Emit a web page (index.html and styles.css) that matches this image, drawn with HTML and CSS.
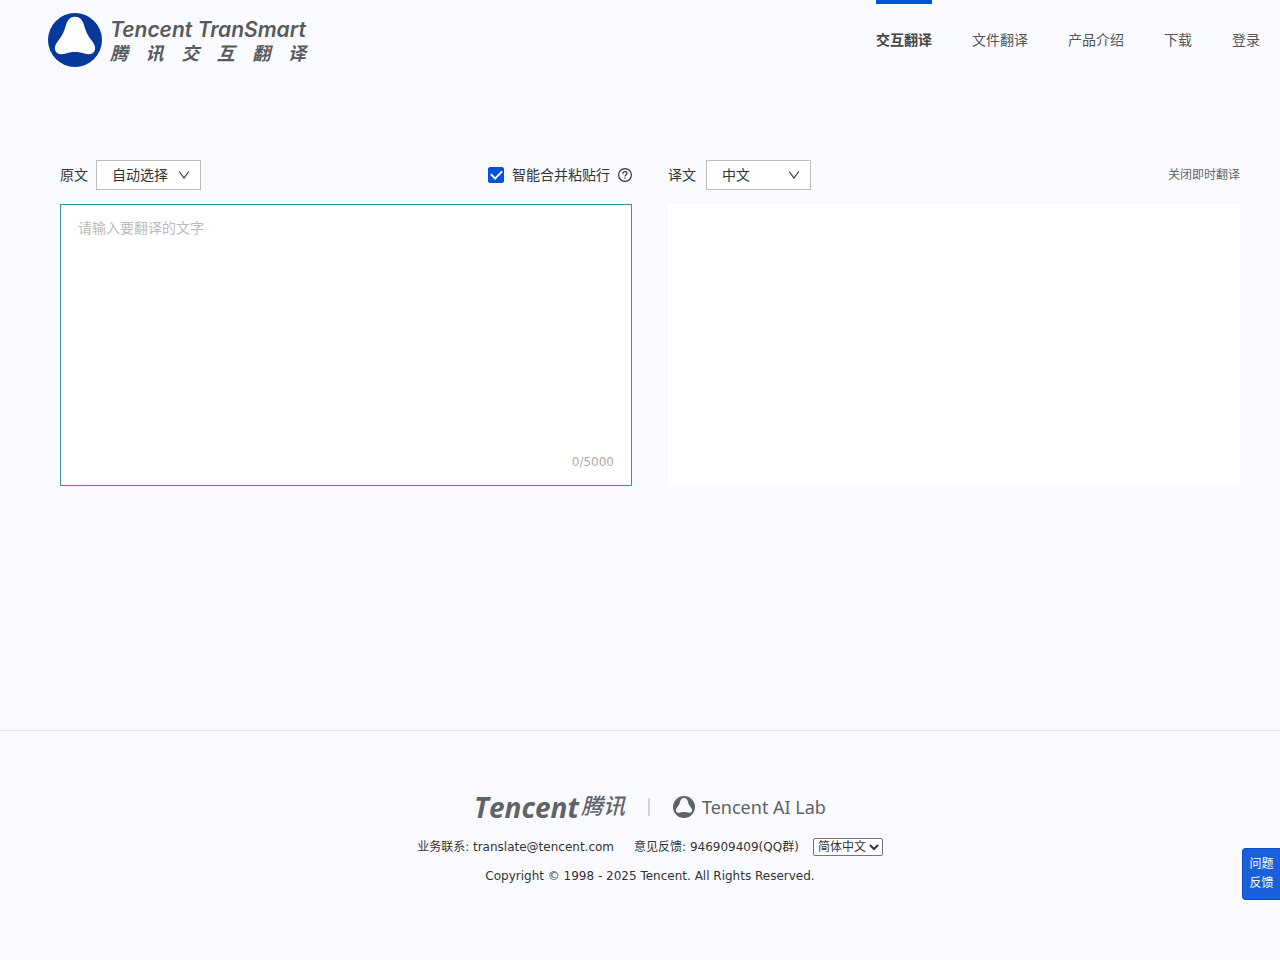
FILE: index.html
```html
<!DOCTYPE html>
<html lang="zh-CN">
<head>
<meta charset="utf-8">
<meta name="viewport" content="width=device-width, initial-scale=1">
<title>腾讯交互翻译</title>
<link rel="stylesheet" href="styles.css">
</head>
<body>
<header class="header">
  <a class="brand" href="#" aria-label="Tencent TranSmart">
    <svg class="brand-mark" viewBox="0 0 54 54" aria-hidden="true">
      <circle cx="27" cy="27" r="27" fill="#04389a"/>
      <path d="M27 3.700C32 3.700 34.500 7 36 12C37.500 18 40 23 44 28C46.500 31 47.500 34 47 36.500C46 41 41.500 42 37 40.800C31 38.500 23 38.500 17 40.800C12.500 42 8 41 7 36.500C6.500 34 7.500 31 10 28C14 23 16.500 18 18 12C19.500 7 22 3.700 27 3.700Z" fill="#fff"/>
    </svg>
    <span class="brand-text">
      <span class="brand-en">Tencent TranSmart</span>
      <span class="brand-zh"><span>腾</span><span>讯</span><span>交</span><span>互</span><span>翻</span><span>译</span></span>
    </span>
  </a>
  <nav class="nav">
    <a class="nav-link active" href="#">交互翻译</a>
    <a class="nav-link" href="#">文件翻译</a>
    <a class="nav-link" href="#">产品介绍</a>
    <a class="nav-link" href="#">下载</a>
    <a class="nav-link" href="#">登录</a>
  </nav>
</header>

<main class="translator">
  <section class="panel">
    <div class="toolbar">
      <label for="source-lang">原文</label>
      <span class="picker source-picker">
        <select id="source-lang"><option>自动选择</option><option>中文</option><option>英语</option></select>
        <svg class="chevron" viewBox="0 0 12 10" aria-hidden="true"><path d="M1.200 1.500 6 8 10.800 1.500"/></svg>
      </span>
      <div class="tools">
        <label class="merge"><input type="checkbox" checked>智能合并粘贴行</label>
        <button class="help" type="button" aria-label="帮助">
          <svg viewBox="0 0 14 14" aria-hidden="true"><circle cx="7" cy="7" r="6.400"/><path d="M5 5.700C5 4.400 5.800 3.700 7 3.700S9 4.500 9 5.500C9 6.800 7 6.900 7 8.400M7 9.600V10.700"/></svg>
        </button>
      </div>
    </div>
    <div class="box source-box">
      <textarea class="source-text" aria-label="原文" placeholder="请输入要翻译的文字"></textarea>
      <span class="counter">0/5000</span>
    </div>
  </section>
  <section class="panel">
    <div class="toolbar">
      <label for="target-lang">译文</label>
      <span class="picker target-picker">
        <select id="target-lang"><option>中文</option><option>英语</option></select>
        <svg class="chevron" viewBox="0 0 12 10" aria-hidden="true"><path d="M1.200 1.500 6 8 10.800 1.500"/></svg>
      </span>
      <button class="instant" type="button">关闭即时翻译</button>
    </div>
    <div class="box"></div>
  </section>
</main>

<footer class="footer">
  <div class="partners">
    <a class="tencent" href="#"><span class="tencent-en">Tencent</span><span class="tencent-zh">腾讯</span></a>
    <span class="divider"></span>
    <a class="lab" href="#">
      <svg class="lab-mark" viewBox="0 0 54 54" aria-hidden="true">
        <circle cx="27" cy="27" r="27" fill="#5f6267"/>
        <path d="M27 5C32 5 34.500 8 36 12C37.500 18 40 23 44 28C46.500 31 47.500 34 47 36.500C46 41 41.500 42 37 40.800C31 38.500 23 38.500 17 40.800C12.500 42 8 41 7 36.500C6.500 34 7.500 31 10 28C14 23 16.500 18 18 12C19.500 8 22 5 27 5Z" fill="#f9faff"/>
      </svg>
      <span>Tencent AI Lab</span>
    </a>
  </div>
  <div class="contact">
    <span>业务联系: translate@tencent.com</span>
    <span>意见反馈: 946909409(QQ群)</span>
    <select class="locale" aria-label="语言"><option>简体中文</option><option>English</option></select>
  </div>
  <p class="copyright">Copyright © 1998 - 2025 Tencent. All Rights Reserved.</p>
</footer>

<button class="feedback" type="button">问题<br>反馈</button>
</body>
</html>
```
FILE: styles.css
```css
* {
  box-sizing: border-box;
}

body {
  margin: 0;
  min-height: 100vh;
  display: flex;
  flex-direction: column;
  background: #f9faff;
  color: #333;
  font: 14px/20px "DejaVu Sans", "Noto Sans CJK SC", sans-serif;
}

a {
  color: inherit;
  text-decoration: none;
}

button,
select,
textarea {
  font-family: inherit;
  color: inherit;
}

button {
  padding: 0;
  border: 0;
  background: none;
  cursor: pointer;
}

.header {
  display: flex;
  justify-content: space-between;
  height: 80px;
  padding: 0 20px 0 48px;
}

.brand {
  display: flex;
  align-items: center;
  gap: 8px;
  color: #58595c;
}

.brand-mark {
  width: 54px;
  height: 54px;
}

.brand-text {
  display: flex;
  flex-direction: column;
  padding-top: 4px;
  font-weight: 600;
  font-style: italic;
}

.brand-en {
  font: italic 600 21px/24px Inter, sans-serif;
}

.brand-zh {
  display: flex;
  justify-content: space-between;
  font-size: 18px;
  line-height: 24px;
}

.nav {
  display: flex;
  gap: 40px;
}

.nav-link {
  padding-top: 26px;
  border-top: 4px solid transparent;
  color: #555;
}

.nav-link.active {
  border-color: #0052d9;
  font-weight: 700;
  color: #444;
}

.translator {
  display: grid;
  grid-template-columns: 1fr 1fr;
  gap: 36px;
  padding: 80px 40px 0 60px;
}

.toolbar {
  display: flex;
  align-items: center;
  height: 30px;
  margin-bottom: 14px;
}

.picker {
  position: relative;
  width: 105px;
  height: 30px;
}

.source-picker {
  margin-left: 8px;
}

.target-picker {
  margin-left: 10px;
}

.picker select {
  appearance: none;
  width: 100%;
  height: 100%;
  padding: 0 24px 0 15px;
  border: 1px solid #babcc4;
  border-radius: 0;
  background: #fff;
  font-size: 14px;
}

.chevron {
  position: absolute;
  top: 10px;
  right: 11px;
  width: 12px;
  height: 10px;
  fill: none;
  stroke: #333;
  stroke-width: 1.2;
  pointer-events: none;
}

.tools {
  display: flex;
  align-items: center;
  gap: 8px;
  margin-left: auto;
}

.merge {
  display: flex;
  align-items: center;
  gap: 8px;
}

.merge input {
  appearance: none;
  display: grid;
  place-items: center;
  width: 16px;
  height: 16px;
  margin: 0;
  border: 1px solid #0052d9;
  border-radius: 2px;
  background: #fff;
}

.merge input:checked {
  background: #0052d9;
}

.merge input:checked::before {
  content: "";
  width: 9px;
  height: 5px;
  margin-bottom: 3px;
  border: solid #fff;
  border-width: 0 0 2px 2px;
  rotate: -45deg;
}

.help,
.help svg {
  display: block;
  width: 14px;
  height: 14px;
}

.help svg {
  fill: none;
  stroke: #333;
  stroke-width: 1.2;
}

.instant {
  margin-left: auto;
  font-size: 12px;
  line-height: 20px;
  color: #666;
}

.box {
  display: flex;
  flex-direction: column;
  min-height: 282px;
  background: #fff;
}

.source-box {
  border: 1px solid #3a8fac;
}

.source-text {
  flex: 1;
  padding: 13px 17px 0;
  border: 0;
  outline: 0;
  resize: none;
  background: none;
  font-size: 14px;
  line-height: 20px;
}

.source-text::placeholder {
  color: #bbb;
}

.counter {
  padding: 0 17px 14px;
  text-align: right;
  font-size: 12px;
  line-height: 18px;
  color: #aaa;
}

.footer {
  display: flex;
  flex-direction: column;
  align-items: center;
  margin-top: auto;
  padding: 64px 0 74px 20px;
  border-top: 1px solid #e3e5e9;
  font-size: 12px;
}

.partners {
  display: flex;
  align-items: center;
  height: 24px;
  color: #5f6267;
}

.tencent,
.lab {
  display: flex;
  align-items: center;
}

.tencent {
  gap: 2px;
}

.tencent-en {
  font: italic 700 28px/24px "Open Sans", sans-serif;
}

.tencent-zh {
  font-size: 22px;
  line-height: 24px;
  font-style: italic;
  font-weight: 500;
}

.divider {
  width: 2px;
  height: 18px;
  margin: 0 23px;
  background: #d2d4d8;
}

.lab {
  gap: 7px;
  font: 18px/24px "Noto Sans", sans-serif;
}

.lab-mark {
  width: 22px;
  height: 22px;
}

.contact {
  display: flex;
  align-items: center;
  gap: 20px;
  margin-top: 18px;
}

.locale {
  width: 70px;
  height: 18px;
  margin-left: -6px;
  padding: 0;
  border: 1px solid #767676;
  border-radius: 2px;
  background: #fff;
  font-size: 12px;
}

.copyright {
  margin: 9px 0 0;
}

.feedback {
  position: fixed;
  right: 0;
  bottom: 60px;
  width: 38px;
  height: 52px;
  border: 1px solid #0c4fc4;
  border-right: 0;
  border-radius: 4px 0 0 4px;
  background: #1a60dc;
  color: #fff;
  font-size: 12px;
  line-height: 19px;
}
```
